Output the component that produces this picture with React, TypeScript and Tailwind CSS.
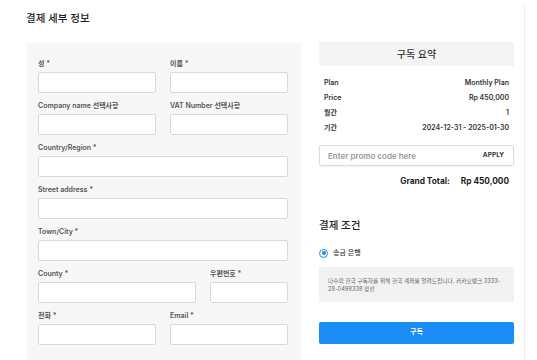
import React from "react";

const font = "font-['Inter','Noto_Sans_CJK_KR',sans-serif]";

type FieldProps = { label: string };

const Field = ({ label }: FieldProps) => (
	<div className="flex flex-col">
		<label className="text-[7px] leading-[10px] font-semibold text-[#555] mb-[3px]">
			{label}
		</label>
		<div className="h-[21px] bg-white border border-[#d9d9d9] rounded-[2px]" />
	</div>
);

const summary = [
	{ k: "Plan", v: "Monthly Plan" },
	{ k: "Price", v: "Rp 450,000" },
	{ k: "월간", v: "1" },
	{ k: "기간", v: "2024-12-31 - 2025-01-30" },
];

export default function App() {
	return (
		<div className={`${font} w-[537px] h-[360px] bg-white overflow-hidden`}>
			<div className="w-[525px] mt-[5px] h-[355px] border-r border-[#ececec] pl-[26px]">
				{/* Title */}
				<h1 className="text-[10.5px] leading-[16px] font-medium text-[#222] pt-[6px]">
					결제 세부 정보
				</h1>

				<div className="flex mt-[16px]">
					{/* Billing form */}
					<div className="w-[276px] bg-[#f7f7f7] pl-[12px] pr-[14px] pt-[16px] pb-[20px] flex flex-col gap-[8px]">
						<div className="grid grid-cols-2 gap-x-[14px]">
							<Field label="성 *" />
							<Field label="이름 *" />
						</div>
						<div className="grid grid-cols-2 gap-x-[14px]">
							<Field label="Company name 선택사항" />
							<Field label="VAT Number 선택사항" />
						</div>
						<Field label="Country/Region *" />
						<Field label="Street address *" />
						<Field label="Town/City *" />
						<div className="grid grid-cols-[1fr_78px] gap-x-[14px]">
							<Field label="County *" />
							<Field label="우편번호 *" />
						</div>
						<div className="grid grid-cols-2 gap-x-[14px]">
							<Field label="전화 *" />
							<Field label="Email *" />
						</div>
					</div>

					{/* Summary */}
					<div className="w-[195px] ml-[17px] -mt-[1px] flex flex-col">
						<div className="h-[24px] bg-[#f4f4f4] flex items-center justify-center text-[10px] font-medium text-[#333]">
							구독 요약
						</div>
						<div className="px-[5px] pt-[12px] flex flex-col gap-[5px]">
							{summary.map((row) => (
								<div
									key={row.k}
									className="flex justify-between text-[7px] leading-[10px] font-semibold text-[#333]">
									<span>{row.k}</span>
									<span>{row.v}</span>
								</div>
							))}
						</div>
						<div className="mt-[12px] h-[21px] border border-[#dcdcdc] rounded-[2px] shadow-[0_1px_2px_rgba(0,0,0,0.06)] flex items-center justify-between pl-[8px] pr-[9px]">
							<span className="text-[8px] font-semibold text-[#999]">
								Enter promo code here
							</span>
							<span className="text-[6.5px] font-bold text-[#333]">APPLY</span>
						</div>
						<div className="flex justify-end items-center gap-[11px] pr-[5px] mt-[9px] text-[8.3px] leading-[12px] font-bold text-[#222]">
							<span>Grand Total:</span>
							<span>Rp 450,000</span>
						</div>

						<h2 className="mt-[32px] text-[10.5px] leading-[14px] font-medium text-[#222]">
							결제 조건
						</h2>
						<div className="mt-[15px] flex items-center gap-[5px]">
							<span className="w-[9px] h-[9px] rounded-full border-[1.5px] border-[#1e88f0] flex items-center justify-center">
								<span className="w-[4px] h-[4px] rounded-full bg-[#1e88f0]" />
							</span>
							<span className="text-[7px] font-medium text-[#333]">송금 은행</span>
						</div>
						<div className="mt-[8px] bg-[#f2f2f2] px-[9px] pt-[10px] pb-[9px] text-[5.7px] leading-[8px] text-[#666]">
							다수의 한국 구독자를 위해 한국 계좌를 알려드립니다. 카카오뱅크 3333-28-0498338 정선
						</div>
						<button className="mt-[20px] h-[22px] rounded-[2px] bg-[#1a8cf6] text-white text-[7px] font-semibold">
							구독
						</button>
					</div>
				</div>
			</div>
		</div>
	);
}
